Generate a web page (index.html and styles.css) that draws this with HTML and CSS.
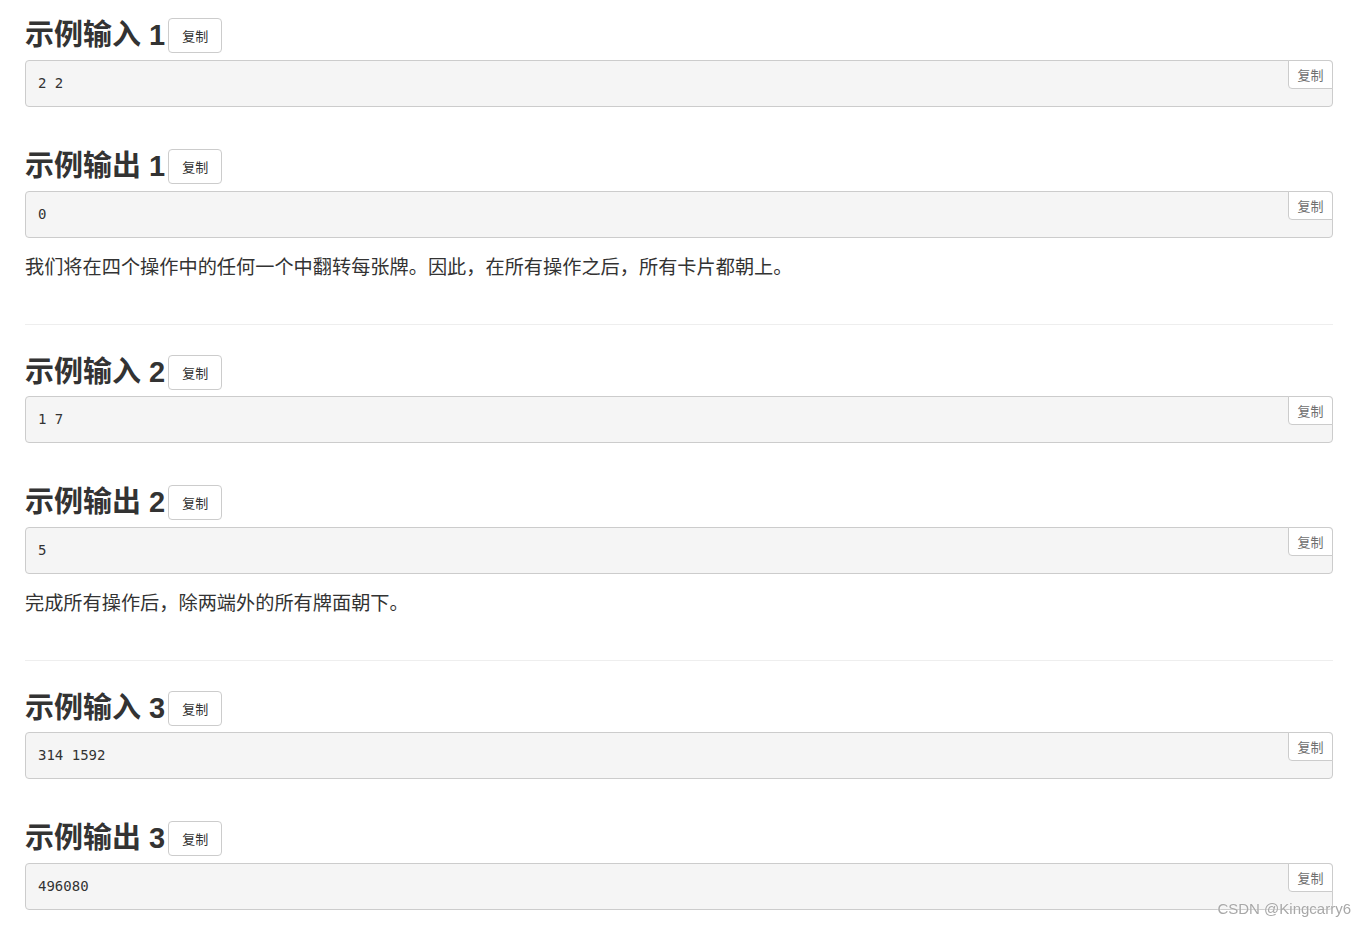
FILE: index.html
```html
<!DOCTYPE html>
<html lang="zh-CN">
<head>
<meta charset="utf-8">
<title>示例</title>
<link rel="stylesheet" href="styles.css">
</head>
<body>
<main class="samples">
  <section class="case">
    <div class="sample">
      <h3 class="sample-title">示例输入 1<button class="btn-copy">复制</button></h3>
      <div class="code-box"><pre class="code">2 2</pre><button class="btn-inner">复制</button></div>
    </div>
    <div class="sample">
      <h3 class="sample-title">示例输出 1<button class="btn-copy">复制</button></h3>
      <div class="code-box"><pre class="code">0</pre><button class="btn-inner">复制</button></div>
    </div>
    <p class="note">我们将在四个操作中的任何一个中翻转每张牌。因此，在所有操作之后，所有卡片都朝上。</p>
    <hr class="divider">
  </section>
  <section class="case">
    <div class="sample">
      <h3 class="sample-title">示例输入 2<button class="btn-copy">复制</button></h3>
      <div class="code-box"><pre class="code">1 7</pre><button class="btn-inner">复制</button></div>
    </div>
    <div class="sample">
      <h3 class="sample-title">示例输出 2<button class="btn-copy">复制</button></h3>
      <div class="code-box"><pre class="code">5</pre><button class="btn-inner">复制</button></div>
    </div>
    <p class="note">完成所有操作后，除两端外的所有牌面朝下。</p>
    <hr class="divider">
  </section>
  <section class="case">
    <div class="sample">
      <h3 class="sample-title">示例输入 3<button class="btn-copy">复制</button></h3>
      <div class="code-box"><pre class="code">314 1592</pre><button class="btn-inner">复制</button></div>
    </div>
    <div class="sample">
      <h3 class="sample-title">示例输出 3<button class="btn-copy">复制</button></h3>
      <div class="code-box"><pre class="code">496080</pre><button class="btn-inner">复制</button></div>
    </div>
  </section>
</main>
<div class="watermark">CSDN @Kingcarry6</div>
</body>
</html>
```
FILE: styles.css
```css
html, body {
  margin: 0;
  padding: 0;
  background: #fff;
}
body {
  font-family: "Liberation Sans", "Noto Sans CJK SC", sans-serif;
  color: #333;
  overflow: hidden;
}
.samples {
  width: 1308px;
  margin-left: 25px;
  padding-top: 18px;
}
.case + .case {
  margin-top: 30px;
}
.sample + .sample {
  margin-top: 42px;
}
.sample-title {
  margin: 0 0 7px 0;
  height: 35px;
  display: flex;
  align-items: center;
  font-size: 29px;
  font-weight: bold;
  color: #333;
  line-height: 35px;
  white-space: pre;
}
.case + .case .sample:first-child .sample-title {
  margin-bottom: 6px;
}
.btn-copy {
  margin-left: 3px;
  height: 35px;
  width: 54px;
  padding: 0;
  font-family: "Noto Sans CJK SC", sans-serif;
  font-size: 13px;
  font-weight: normal;
  color: #333;
  background: #fff;
  border: 1px solid #ccc;
  border-radius: 4px;
}
.code-box {
  position: relative;
  background: #f5f5f5;
  border: 1px solid #ccc;
  border-radius: 4px;
}
.code {
  margin: 0;
  padding: 12px 12px 13px 12px;
  font-family: "DejaVu Sans Mono", monospace;
  font-size: 14px;
  line-height: 20px;
  color: #333;
}
.btn-inner {
  position: absolute;
  top: -1px;
  right: -1px;
  width: 45px;
  height: 29px;
  padding: 0;
  font-family: "Noto Sans CJK SC", sans-serif;
  font-size: 13px;
  color: #6f6f6f;
  background: #fff;
  border: 1px solid #ccc;
  border-radius: 0 4px 0 4px;
}
.note {
  margin: 14px 0 0 0;
  font-family: "Noto Sans CJK SC", sans-serif;
  font-size: 19.2px;
  line-height: 28px;
  color: #333;
}
.divider {
  margin: 44px 0 0 0;
  border: 0;
  border-top: 1px solid #eee;
}
.watermark {
  position: fixed;
  right: 15px;
  bottom: 10px;
  font-family: "Liberation Sans", sans-serif;
  font-size: 15px;
  color: #a8a8a8;
  text-shadow: 0 0 2px #fff;
}
```
